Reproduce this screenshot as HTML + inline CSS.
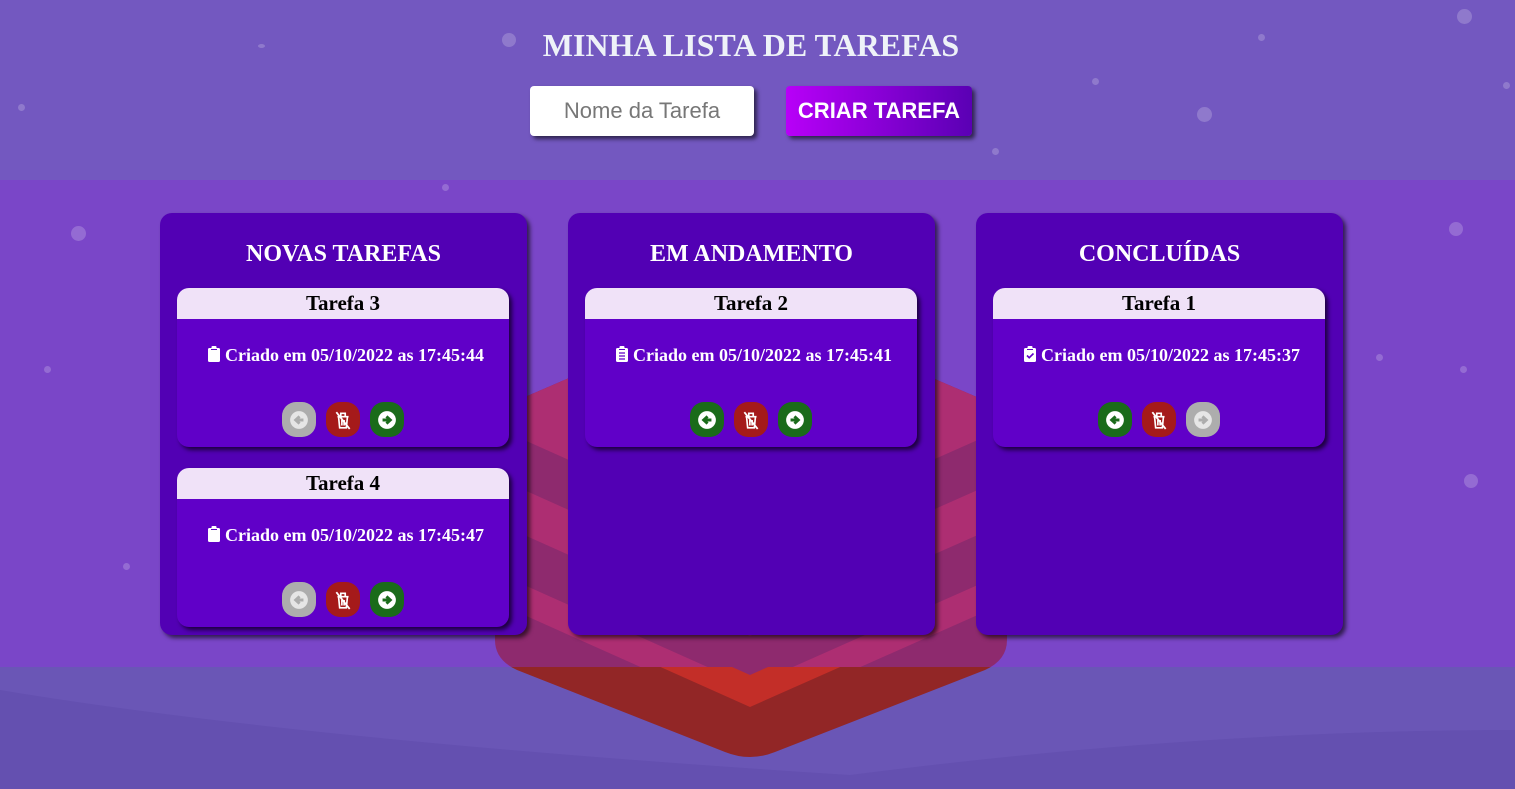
<!DOCTYPE html>
<html><head><meta charset="utf-8"><style>
*{margin:0;padding:0;box-sizing:border-box}
body{width:1515px;height:789px;overflow:hidden;position:relative;background:#6a56b6;font-family:"Liberation Serif",serif}
.abs{position:absolute}
h1{position:absolute;left:0;width:1502px;top:27px;text-align:center;color:#eef2f8;font-size:32px;font-weight:bold}
.inp{left:530px;top:86px;width:224px;height:50px;background:#fff;border-radius:4px;box-shadow:3px 3px 4px rgba(0,0,0,.6);font-family:"Liberation Sans",sans-serif;font-size:22px;color:#777;text-align:center;line-height:50px}
.btn{left:786px;top:86px;width:186px;height:50px;border-radius:4px;background:linear-gradient(90deg,#b800f8,#5a00b4);box-shadow:3px 3px 4px rgba(0,0,0,.6);font-family:"Liberation Sans",sans-serif;font-size:22px;color:#fff;font-weight:bold;text-align:center;line-height:50px}
.col{top:213px;width:367px;height:422px;background:#5200b4;border-radius:12px;box-shadow:3px 3px 4px rgba(0,0,0,.6)}
.col h2{text-align:center;color:#fff;font-size:24px;margin-top:28px;font-weight:bold}
.card{position:absolute;left:17px;width:332px;height:159px;background:#6000c8;border-radius:12px;box-shadow:3px 3px 4px rgba(0,0,0,.65);overflow:hidden}
.card .hd{height:31px;background:#f0e2f8;text-align:center;font-size:21px;font-weight:bold;color:#000;line-height:30px}
.card .tx{text-align:center;color:#fff;font-weight:bold;font-size:18px;margin-top:26px;white-space:nowrap;padding-left:6px}
.card .tx svg{vertical-align:-1px;margin-right:5px}
.bs{position:absolute;top:114px;left:0;width:332px;display:flex;justify-content:center;gap:10px}
.b{width:34px;height:35px;border-radius:14px;display:flex;align-items:center;justify-content:center}
.g{background:#1a6b1a}.r{background:#a51a1a}.x{background:#adadad}
.dot{position:absolute;border-radius:50%;background:rgba(255,255,255,.2)}
</style></head><body>
<div class="abs" style="left:0;top:0;width:1515px;height:180px;background:#7358c0"></div>
<div class="abs" style="left:0;top:180px;width:1515px;height:487px;background:#7a46c8"></div>
<svg class="abs" style="left:0;top:0" width="1515" height="789">
<defs>
<clipPath id="hx"><path d="M495 410 L750 300 L1007 410 L1007 640 Q1007 660 985 670 L775 752 Q750 762 725 752 L517 670 Q495 660 495 640Z"/></clipPath>
<clipPath id="up"><rect x="0" y="0" width="1515" height="667"/></clipPath>
<clipPath id="lo"><rect x="0" y="667" width="1515" height="122"/></clipPath>
</defs>
<path d="M0 690 Q300 740 850 775 Q1200 730 1515 730 L1515 789 L0 789Z" fill="#6450b0"/>
<g clip-path="url(#hx)">
<g clip-path="url(#up)">
<rect x="480" y="280" width="540" height="500" fill="#8e2a6e"/>
<polygon points="495,602 750,716 1007,602 1007,0 495,0" fill="#ad2e72"/>
<polygon points="495,572 750,686 1007,572 1007,0 495,0" fill="#8e2a6e"/>
<polygon points="495,522 750,636 1007,522 1007,0 495,0" fill="#ad2e72"/>
<polygon points="495,477 750,591 1007,477 1007,0 495,0" fill="#8e2a6e"/>
<polygon points="495,427 750,541 1007,427 1007,0 495,0" fill="#ad2e72"/>
</g>
<g clip-path="url(#lo)">
<rect x="480" y="600" width="540" height="200" fill="#922626"/>
<polygon points="495,593 750,707 1007,593 1007,0 495,0" fill="#c32e28"/>
<polygon points="495,561 750,675 1007,561 1007,0 495,0" fill="#8e2a6e"/>
</g>
</g>
</svg>
<div class="dot" style="left:502px;top:33px;width:14px;height:14px"></div>
<div class="dot" style="left:1457px;top:9px;width:15px;height:15px"></div>
<div class="dot" style="left:1197px;top:107px;width:15px;height:15px"></div>
<div class="dot" style="left:1258px;top:34px;width:7px;height:7px"></div>
<div class="dot" style="left:1092px;top:78px;width:7px;height:7px"></div>
<div class="dot" style="left:992px;top:148px;width:7px;height:7px"></div>
<div class="dot" style="left:1503px;top:82px;width:7px;height:7px"></div>
<div class="dot" style="left:18px;top:104px;width:7px;height:7px"></div>
<div class="dot" style="left:258px;top:44px;width:7px;height:4px"></div>
<div class="dot" style="left:71px;top:226px;width:15px;height:15px"></div>
<div class="dot" style="left:1449px;top:222px;width:14px;height:14px"></div>
<div class="dot" style="left:1464px;top:474px;width:14px;height:14px"></div>
<div class="dot" style="left:442px;top:184px;width:7px;height:7px"></div>
<div class="dot" style="left:44px;top:366px;width:7px;height:7px"></div>
<div class="dot" style="left:123px;top:563px;width:7px;height:7px"></div>
<div class="dot" style="left:1376px;top:354px;width:7px;height:7px"></div>
<div class="dot" style="left:1460px;top:366px;width:7px;height:7px"></div>

<h1>MINHA LISTA DE TAREFAS</h1>
<div class="abs inp">Nome da Tarefa</div>
<div class="abs btn">CRIAR TAREFA</div>

<svg width="0" height="0" style="position:absolute">
<defs>
<g id="la"><circle cx="9" cy="9" r="8" fill="currentColor"/><path d="M13 9H7M9.5 5.8L6 9l3.5 3.2" stroke="var(--c)" stroke-width="2.6" fill="none"/></g>
<g id="ra"><circle cx="9" cy="9" r="8" fill="currentColor"/><path d="M5 9h6M8.5 5.8L12 9l-3.5 3.2" stroke="var(--c)" stroke-width="2.6" fill="none"/></g>
<g id="tr"><path d="M4 6h10M5 6l1 10h6l1-10M7 6V3h4v3M8 9v5M10 9v5" stroke="#fff" stroke-width="1.5" fill="none"/><path d="M3 2l12 15" stroke="#fff" stroke-width="1.6"/></g>
<g id="cb"><rect x="0" y="2" width="12" height="14" rx="1.5" fill="#fff"/><rect x="3.5" y="0" width="5" height="4" rx="1" fill="#fff"/><rect x="3" y="3" width="6" height="1" fill="#6000c8"/></g>
</defs></svg>

<div class="abs col" style="left:160px"><h2>NOVAS TAREFAS</h2>
<div class="card" style="top:75px"><div class="hd">Tarefa 3</div><div class="tx"><svg width="12" height="16"><use href="#cb"/></svg>Criado em 05/10/2022 as 17:45:44</div>
<div class="bs"><div class="b x"><svg width="20" height="20" viewBox="0 0 18 18" style="color:#e6e6e6;--c:#adadad"><use href="#la"/></svg></div><div class="b r"><svg width="20" height="20" viewBox="0 0 18 18"><use href="#tr"/></svg></div><div class="b g"><svg width="20" height="20" viewBox="0 0 18 18" style="color:#fff;--c:#1a6b1a"><use href="#ra"/></svg></div></div></div>
<div class="card" style="top:255px"><div class="hd">Tarefa 4</div><div class="tx"><svg width="12" height="16"><use href="#cb"/></svg>Criado em 05/10/2022 as 17:45:47</div>
<div class="bs"><div class="b x"><svg width="20" height="20" viewBox="0 0 18 18" style="color:#e6e6e6;--c:#adadad"><use href="#la"/></svg></div><div class="b r"><svg width="20" height="20" viewBox="0 0 18 18"><use href="#tr"/></svg></div><div class="b g"><svg width="20" height="20" viewBox="0 0 18 18" style="color:#fff;--c:#1a6b1a"><use href="#ra"/></svg></div></div></div>
</div>

<div class="abs col" style="left:568px"><h2>EM ANDAMENTO</h2>
<div class="card" style="top:75px"><div class="hd">Tarefa 2</div><div class="tx"><svg width="12" height="16"><use href="#cb"/><path d="M3 7h6M3 10h6M3 13h6" stroke="#6000c8" stroke-width="1.3"/></svg>Criado em 05/10/2022 as 17:45:41</div>
<div class="bs"><div class="b g"><svg width="20" height="20" viewBox="0 0 18 18" style="color:#fff;--c:#1a6b1a"><use href="#la"/></svg></div><div class="b r"><svg width="20" height="20" viewBox="0 0 18 18"><use href="#tr"/></svg></div><div class="b g"><svg width="20" height="20" viewBox="0 0 18 18" style="color:#fff;--c:#1a6b1a"><use href="#ra"/></svg></div></div></div>
</div>

<div class="abs col" style="left:976px"><h2>CONCLUÍDAS</h2>
<div class="card" style="top:75px"><div class="hd">Tarefa 1</div><div class="tx"><svg width="12" height="16"><use href="#cb"/><path d="M3 9.5l2.2 2.2L9.5 7.5" stroke="#6000c8" stroke-width="1.6" fill="none"/></svg>Criado em 05/10/2022 as 17:45:37</div>
<div class="bs"><div class="b g"><svg width="20" height="20" viewBox="0 0 18 18" style="color:#fff;--c:#1a6b1a"><use href="#la"/></svg></div><div class="b r"><svg width="20" height="20" viewBox="0 0 18 18"><use href="#tr"/></svg></div><div class="b x"><svg width="20" height="20" viewBox="0 0 18 18" style="color:#e6e6e6;--c:#adadad"><use href="#ra"/></svg></div></div></div>
</div>
</body></html>
